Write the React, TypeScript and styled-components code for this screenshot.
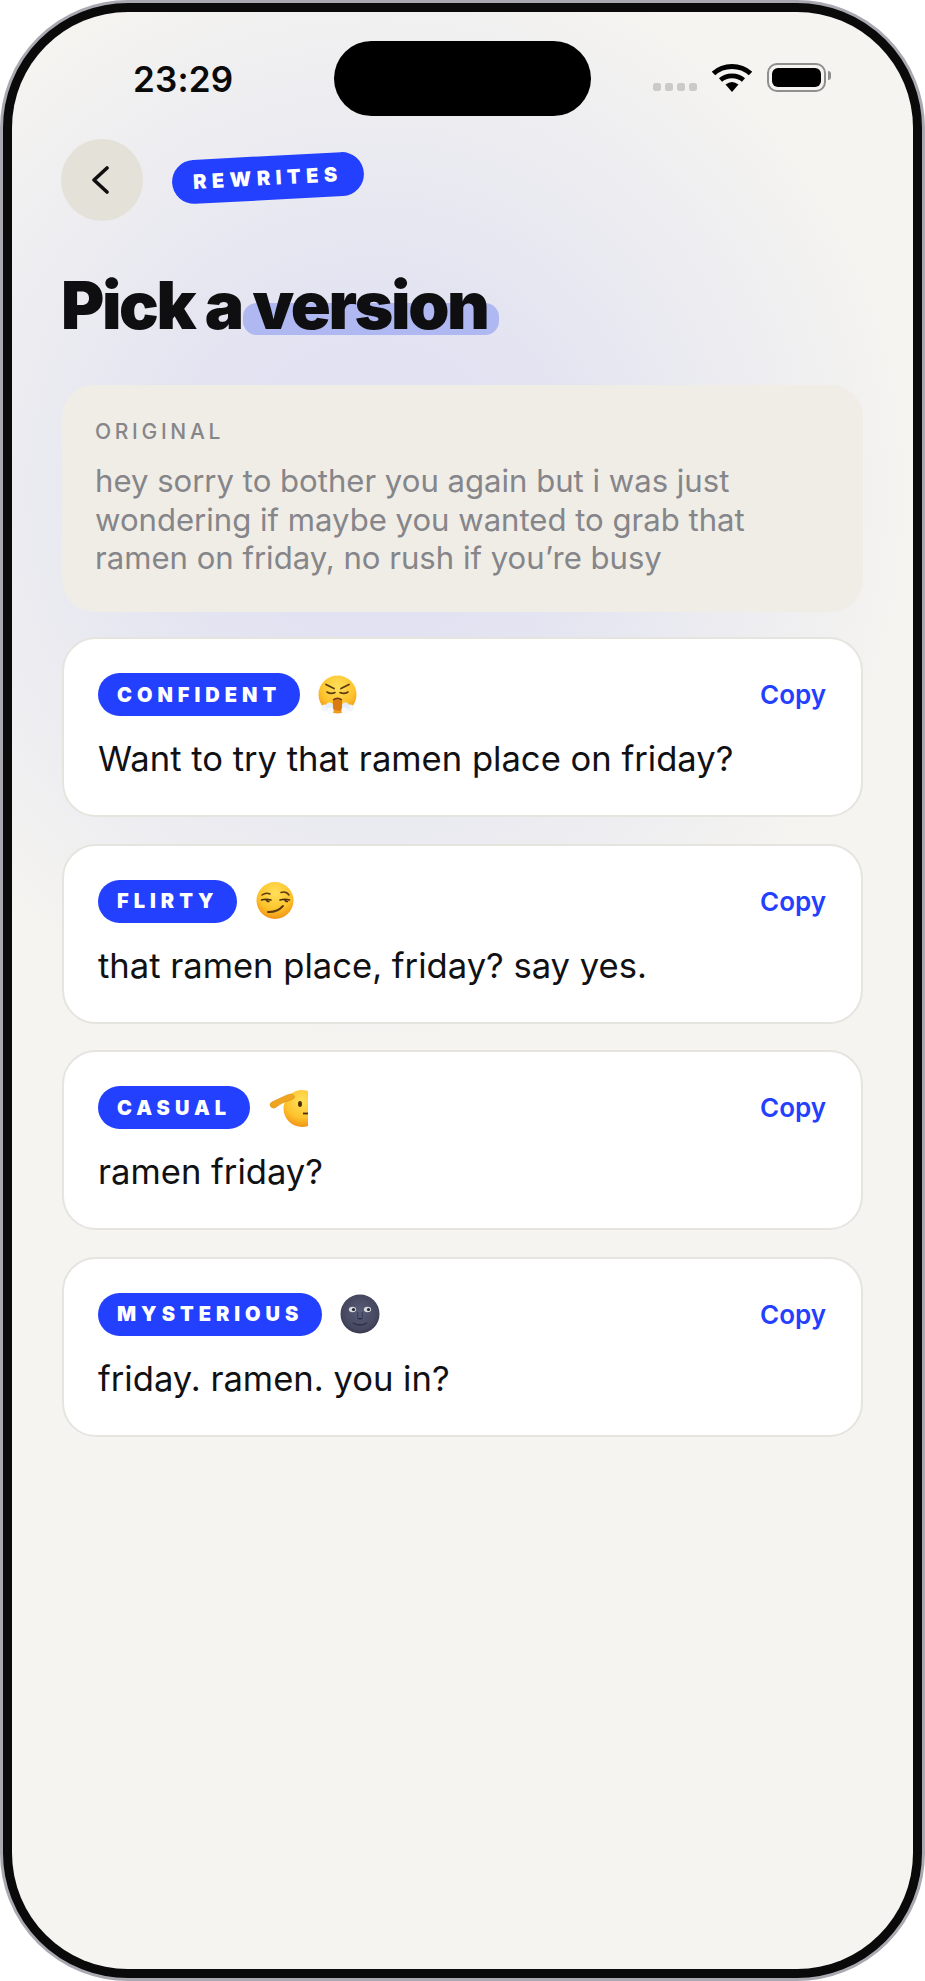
import React from 'react';
import styled, { createGlobalStyle } from 'styled-components';

const GlobalStyle = createGlobalStyle`
  html, body {
    margin: 0;
    padding: 0;
    background: #ffffff;
    font-family: Inter, "Noto Sans", sans-serif;
  }
`;

const Frame = styled.div`
  box-sizing: border-box;
  width: 925px;
  height: 1981px;
  padding: 9px;
  border: 3px solid #aaa9b1;
  border-radius: 128px;
  background: #0a0a0a;
`;

const Screen = styled.div`
  position: relative;
  box-sizing: border-box;
  height: 100%;
  padding: 0 50px;
  border-radius: 116px;
  overflow: hidden;
  background:
    radial-gradient(ellipse 550px 560px at 360px 480px, #dddef2 0%, rgba(222, 223, 242, 0.72) 40%, rgba(228, 228, 240, 0) 100%),
    #f5f4f0;
`;

const StatusBar = styled.div`
  box-sizing: border-box;
  height: 127px;
  padding: 49px 37px 0 71px;
  display: flex;
  justify-content: space-between;
  align-items: flex-start;
`;

const Time = styled.span`
  font-size: 35px;
  line-height: 36px;
  font-weight: 600;
  letter-spacing: 0.2px;
  color: #0a0a0a;
`;

const Island = styled.div`
  position: absolute;
  top: 29px;
  left: 322px;
  width: 257px;
  height: 75px;
  border-radius: 38px;
  background: #000000;
`;

const StatusIcons = styled.div`
  display: flex;
  align-items: center;
  gap: 15px;
  margin-top: 2px;
  height: 29px;
`;

const SignalDots = styled.div`
  display: flex;
  gap: 4px;
  margin-top: 18px;
`;

const SignalDot = styled.span`
  width: 8px;
  height: 8px;
  border-radius: 2.5px;
  background: #cbcac8;
`;

const Battery = styled.div`
  position: relative;
  box-sizing: border-box;
  width: 59px;
  height: 29px;
  padding: 3px;
  border: 2px solid #8f8f8f;
  border-radius: 10px;

  &::before {
    content: '';
    display: block;
    height: 100%;
    border-radius: 6px;
    background: #000000;
  }

  &::after {
    content: '';
    position: absolute;
    top: 6px;
    right: -7px;
    width: 3px;
    height: 9px;
    border-radius: 0 3px 3px 0;
    background: #8f8f8f;
  }
`;

const NavRow = styled.div`
  display: flex;
  align-items: flex-start;
  margin-left: -1px;
  gap: 29px;
`;

const BackButton = styled.button`
  width: 82px;
  height: 82px;
  padding: 0;
  border: none;
  border-radius: 50%;
  background: #e4e1d9;
  display: flex;
  align-items: center;
  justify-content: center;
`;

const RewritesBadge = styled.span`
  margin-top: 17px;
  padding: 0 21px;
  height: 44px;
  display: flex;
  align-items: center;
  border-radius: 22px;
  background: #2340ff;
  color: #ffffff;
  font-size: 20px;
  font-weight: 900;
  letter-spacing: 5.5px;
  transform: rotate(-3deg);
`;

const Title = styled.h1`
  margin: 46px 0 42px;
  margin-left: -1px;
  font-size: 66px;
  line-height: 76px;
  font-weight: 900;
  letter-spacing: -2.4px;
  color: #0f0f12;
`;

const Highlight = styled.span`
  position: relative;
  display: inline-block;
  z-index: 0;

  &::before {
    content: '';
    position: absolute;
    z-index: -1;
    left: -10px;
    right: -12px;
    top: 36px;
    bottom: 8px;
    border-radius: 14px;
    background: #b0b8f2;
  }
`;

const OriginalCard = styled.section`
  box-sizing: border-box;
  height: 227px;
  padding: 35px 32px 35px 33px;
  margin: 0 0 25px;
  border-radius: 32px;
  background: #efede6;
`;

const OriginalLabel = styled.div`
  font-size: 21px;
  line-height: 24px;
  font-weight: 500;
  letter-spacing: 3.7px;
  color: #86868a;
`;

const OriginalText = styled.p`
  margin: 18px 0 0;
  font-size: 31.1px;
  line-height: 38.6px;
  color: #85858a;
`;

const CardList = styled.div`
  display: flex;
  flex-direction: column;
  gap: 26.5px;
`;

const Card = styled.article`
  box-sizing: border-box;
  height: 180px;
  padding: 34px 35px 0 34px;
  border: 2px solid #e6e4de;
  border-radius: 34px;
  background: #ffffff;
`;

const CardHeader = styled.div`
  display: flex;
  align-items: center;
  gap: 18px;
`;

const TonePill = styled.span`
  height: 43px;
  padding: 0 18.5px 0 19px;
  display: flex;
  align-items: center;
  border-radius: 22px;
  background: #2340ff;
  color: #ffffff;
  font-size: 20px;
  font-weight: 900;
  letter-spacing: 5px;
`;

const CopyButton = styled.button`
  margin-left: auto;
  padding: 0;
  border: none;
  background: none;
  font-family: inherit;
  font-size: 26px;
  font-weight: 600;
  color: #2340ff;
`;

const CardText = styled.p`
  margin: 20px 0 0;
  font-size: 34.6px;
  line-height: 44px;
  color: #111114;
`;

const Face = () => (
  <defs>
    <radialGradient id="faceGlow" cx="50%" cy="30%" r="75%">
      <stop offset="0%" stopColor="#ffe05a" />
      <stop offset="60%" stopColor="#fdc32c" />
      <stop offset="100%" stopColor="#ee8a12" />
    </radialGradient>
    <radialGradient id="moonGlow" cx="50%" cy="45%" r="60%">
      <stop offset="0%" stopColor="#5a5d78" />
      <stop offset="75%" stopColor="#45475f" />
      <stop offset="100%" stopColor="#2e3044" />
    </radialGradient>
  </defs>
);

const SteamFace = () => (
  <svg width="40" height="40" viewBox="0 0 40 40">
    <Face />
    <circle cx="19.5" cy="19.5" r="19" fill="url(#faceGlow)" />
    <path d="M8 9.5 L16 13.5 M31 9.5 L23 13.5" stroke="#5c3a12" strokeWidth="1.8" strokeLinecap="round" />
    <path d="M9 17 Q13 19.5 17 17.5 M30 17 Q26 19.5 22 17.5" stroke="#5c3a12" strokeWidth="1.6" fill="none" strokeLinecap="round" />
    <path d="M15 35 L15 25 Q19.5 21.5 24 25 L24 36 Z" fill="#d97a12" />
    <path d="M15 25 Q19.5 21.5 24 25" stroke="#6b3c10" strokeWidth="1.5" fill="none" />
    <circle cx="7" cy="33" r="3.6" fill="#f2f6fb" />
    <circle cx="11.5" cy="31" r="3.6" fill="#e4edf8" />
    <circle cx="12.5" cy="35.5" r="3.2" fill="#f7f9fd" />
    <circle cx="32" cy="33" r="3.6" fill="#f2f6fb" />
    <circle cx="27.5" cy="31" r="3.6" fill="#e4edf8" />
    <circle cx="26.5" cy="35.5" r="3.2" fill="#f7f9fd" />
  </svg>
);

const SmirkFace = () => (
  <svg width="40" height="40" viewBox="0 0 40 40">
    <Face />
    <circle cx="20" cy="19.5" r="18.5" fill="url(#faceGlow)" />
    <path d="M7 14 Q11 11 15 13 M26 11.5 Q31 10 34 14" stroke="#5c3a12" strokeWidth="1.5" fill="none" strokeLinecap="round" />
    <path d="M6.5 19 Q11 17.5 16 19 M11.5 19 Q12 21 14 20.5 M25 19 Q30 17.5 34.5 19 M30 19 Q30.5 21 32.5 20.5" stroke="#4a2e10" strokeWidth="1.5" fill="none" strokeLinecap="round" />
    <path d="M13 31 Q22 31.5 28 25" stroke="#5c3a12" strokeWidth="1.9" fill="none" strokeLinecap="round" />
  </svg>
);

const SaluteFace = () => (
  <svg width="40" height="40" viewBox="0 0 40 40">
    <Face />
    <circle cx="34" cy="20.5" r="18.5" fill="url(#faceGlow)" />
    <path d="M3 19 Q0.5 15.5 4 14 L19 7 Q24 5 26.5 8 Q27 11 21 12.5 Q13 15 9 18.5 Q5.5 21.5 3 19 Z" fill="#f0a51e" stroke="#d98a14" strokeWidth="0.6" />
    <ellipse cx="32" cy="16" rx="2" ry="3" fill="#4a2e10" />
    <path d="M35 25.5 L40 25.5" stroke="#4a2e10" strokeWidth="1.8" />
  </svg>
);

const MoonFace = () => (
  <svg width="40" height="40" viewBox="0 0 40 40">
    <Face />
    <circle cx="20" cy="20" r="19.5" fill="url(#moonGlow)" />
    <ellipse cx="12.5" cy="15.5" rx="3.6" ry="2.8" fill="#d9dbe0" />
    <ellipse cx="27.5" cy="15.5" rx="3.6" ry="2.8" fill="#d9dbe0" />
    <circle cx="13.5" cy="15.5" r="1.6" fill="#23242f" />
    <circle cx="28.5" cy="15.5" r="1.6" fill="#23242f" />
    <path d="M17.5 24 Q20 25.5 22.5 24" stroke="#2b2d40" strokeWidth="1.4" fill="none" />
    <path d="M13 29 Q20 33 27 29" stroke="#2b2d40" strokeWidth="1.3" fill="none" />
    <path d="M18 18 L17.5 23 M22 18 L22.5 23" stroke="#383a50" strokeWidth="1" fill="none" />
  </svg>
);

const versions = [
  { tone: 'CONFIDENT', Emoji: SteamFace, text: 'Want to try that ramen place on friday?' },
  { tone: 'FLIRTY', Emoji: SmirkFace, text: 'that ramen place, friday? say yes.' },
  { tone: 'CASUAL', Emoji: SaluteFace, text: 'ramen friday?' },
  { tone: 'MYSTERIOUS', Emoji: MoonFace, text: 'friday. ramen. you in?' },
];

export default function App() {
  return (
    <>
      <GlobalStyle />
      <Frame>
        <Screen>
          <StatusBar>
            <Time>23:29</Time>
            <StatusIcons>
              <SignalDots>
                <SignalDot />
                <SignalDot />
                <SignalDot />
                <SignalDot />
              </SignalDots>
              <svg width="40" height="29" viewBox="0 0 40 29">
                <path d="M1.5 10.5 C11.5 1 28.5 1 38.5 10.5" fill="none" stroke="#000" strokeWidth="5" />
                <path d="M8.5 17 C14.5 11.5 25.5 11.5 31.5 17" fill="none" stroke="#000" strokeWidth="4.6" />
                <path d="M13.5 21.5 Q20 16.5 26.5 21.5 L20 29 Z" fill="#000" />
              </svg>
              <Battery />
            </StatusIcons>
          </StatusBar>
          <Island />
          <NavRow>
            <BackButton aria-label="Back">
              <svg width="20" height="30" viewBox="0 0 20 30">
                <path d="M15 3 L2 15 L15 27" fill="none" stroke="#0f0f12" strokeWidth="3.6" strokeLinecap="round" strokeLinejoin="round" />
              </svg>
            </BackButton>
            <RewritesBadge>REWRITES</RewritesBadge>
          </NavRow>
          <Title>
            Pick a <Highlight>version</Highlight>
          </Title>
          <OriginalCard>
            <OriginalLabel>ORIGINAL</OriginalLabel>
            <OriginalText>
              hey sorry to bother you again but i was just wondering if maybe you wanted to grab that ramen on friday, no rush if you’re busy
            </OriginalText>
          </OriginalCard>
          <CardList>
            {versions.map(({ tone, Emoji, text }) => (
              <Card key={tone}>
                <CardHeader>
                  <TonePill>{tone}</TonePill>
                  <Emoji />
                  <CopyButton>Copy</CopyButton>
                </CardHeader>
                <CardText>{text}</CardText>
              </Card>
            ))}
          </CardList>
        </Screen>
      </Frame>
    </>
  );
}
